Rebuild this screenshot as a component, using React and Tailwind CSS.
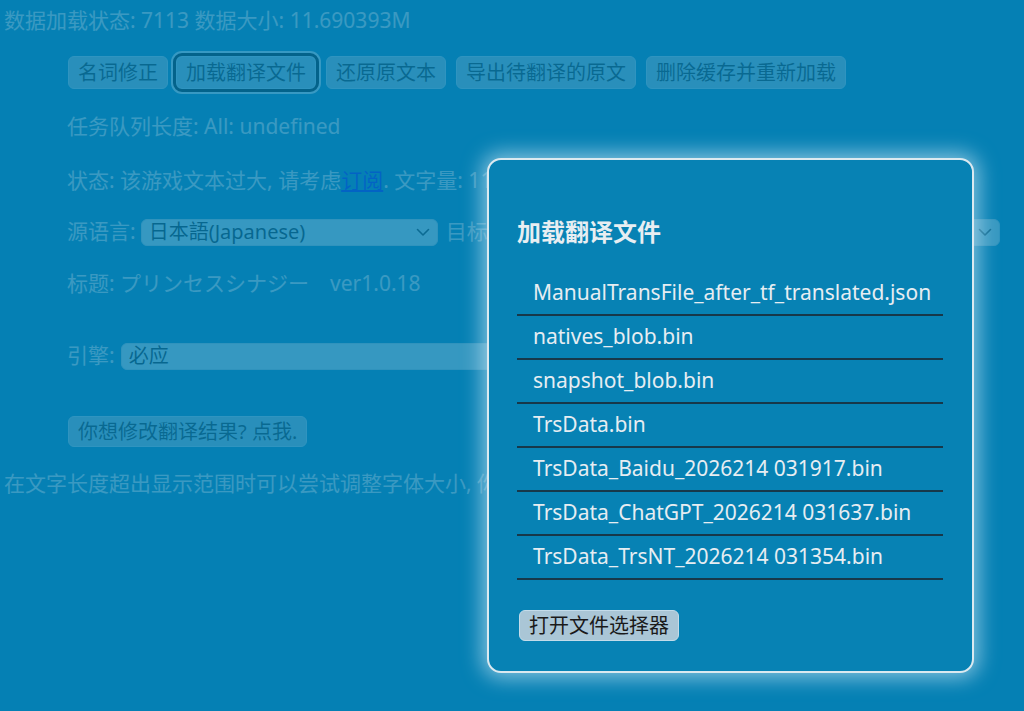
import React from "react";

const Chevron = ({ className = "" }) => (
  <svg width="14" height="9" viewBox="0 0 14 9" className={className} fill="none">
    <path d="M1.5 1.5 L7 7 L12.5 1.5" stroke="currentColor" strokeWidth="1.6" strokeLinecap="round" strokeLinejoin="round" />
  </svg>
);

const Btn = ({ children, focused }) => (
  <div
    className={
      "h-[33px] flex items-center rounded-[6px] border border-[#c4dcea] bg-[#aac6d6] text-[#1a1a1a] text-[20px] leading-none whitespace-nowrap " +
      (focused ? "-ml-[2px] px-[9px] outline-[3px] outline outline-black outline-offset-0 shadow-[0_0_0_5px_rgba(255,255,255,0.9)]" : "px-[9px]")
    }
  >
    {children}
  </div>
);

const files = [
  "ManualTransFile_after_tf_translated.json",
  "natives_blob.bin",
  "snapshot_blob.bin",
  "TrsData.bin",
  "TrsData_Baidu_2026214 031917.bin",
  "TrsData_ChatGPT_2026214 031637.bin",
  "TrsData_TrsNT_2026214 031354.bin",
];

export default function App() {
  return (
    <div
      className="relative w-[1024px] h-[711px] overflow-hidden bg-[#0580b4]"
      style={{ fontFamily: '"Noto Sans", "Noto Sans CJK SC", sans-serif' }}
    >
      {/* faded page */}
      <div className="opacity-[0.22] text-[#f4f4f4] text-[21px] flex flex-col">
        <div className="h-[42px] pl-[4px] flex items-center whitespace-nowrap">
          数据加载状态: 7113 数据大小: 11.690393M
        </div>
        <div className="mt-[14px] pl-[68px] flex gap-[10px]">
          <Btn>名词修正</Btn>
          <Btn focused>加载翻译文件</Btn>
          <Btn>还原原文本</Btn>
          <Btn>导出待翻译的原文</Btn>
          <Btn>删除缓存并重新加载</Btn>
        </div>
        <div className="mt-[23px] h-[30px] pl-[67px] flex items-center whitespace-nowrap">
          任务队列长度: All: undefined
        </div>
        <div className="mt-[24px] h-[30px] pl-[67px] flex items-center whitespace-nowrap">
          状态: 该游戏文本过大, 请考虑<span className="text-[#0000ff] underline">订阅</span>. 文字量: 11
        </div>
        <div className="mt-[21px] h-[30px] pl-[67px] flex items-center whitespace-nowrap">
          <span>源语言:</span>
          <div className="ml-[5px] w-[297px] h-[27px] rounded-[6px] bg-[#e2ecf2] border border-[#c8d8e0] text-[#111] text-[20px] flex items-center justify-between px-[7px]">
            <span>日本語(Japanese)</span>
            <Chevron className="text-[#222]" />
          </div>
          <span className="ml-[8px]">目标</span>
          <div className="ml-[60px] flex-1 mr-[24px] h-[27px] rounded-[6px] bg-[#e2ecf2] border border-[#c8d8e0] text-[#111] flex items-center justify-end px-[7px]">
            <Chevron className="text-[#222]" />
          </div>
        </div>
        <div className="mt-[22px] h-[30px] pl-[67px] flex items-center whitespace-nowrap">
          标题: プリンセスシナジー　ver1.0.18
        </div>
        <div className="mt-[42px] h-[30px] pl-[67px] flex items-center whitespace-nowrap">
          <span>引擎:</span>
          <div className="ml-[6px] w-[800px] h-[27px] rounded-[6px] bg-[#e2ecf2] border border-[#c8d8e0] text-[#111] text-[20px] flex items-center px-[7px]">
            必应
          </div>
        </div>
        <div className="mt-[45px] pl-[68px] flex">
          <div className="h-[31px] px-[9px] flex items-center rounded-[6px] border border-[#c4dcea] bg-[#aac6d6] text-[#1a1a1a] text-[20px] leading-none whitespace-nowrap">
            你想修改翻译结果? 点我.
          </div>
        </div>
        <div className="mt-[22px] h-[30px] pl-[4px] flex items-center whitespace-nowrap">
          在文字长度超出显示范围时可以尝试调整字体大小, 你
        </div>
      </div>

      {/* modal */}
      <div className="absolute left-[487px] top-[158px] w-[487px] h-[515px] rounded-[14px] border-2 border-[#dbe9f0] bg-[#0782b4] shadow-[0_0_20px_5px_rgba(230,245,255,0.55)] px-[28px] pt-[56px] flex flex-col">
        <div className="h-[32px] flex items-center text-[24px] font-bold text-[#e8eef2] leading-none">
          加载翻译文件
        </div>
        <div className="mt-[24px] w-[426px] flex flex-col">
          {files.map((f) => (
            <div
              key={f}
              className="h-[44px] border-b-2 border-[#17384a] pl-[16px] flex items-center text-[21px] text-[#e6edf2] whitespace-nowrap"
            >
              {f}
            </div>
          ))}
        </div>
        <div className="mt-[30px] flex pl-[2px]">
          <div className="h-[31px] px-[9px] flex items-center rounded-[6px] border border-[#c4dcea] bg-[#aac6d6] text-[#1a1a1a] text-[20px] leading-none whitespace-nowrap">
            打开文件选择器
          </div>
        </div>
      </div>
    </div>
  );
}
